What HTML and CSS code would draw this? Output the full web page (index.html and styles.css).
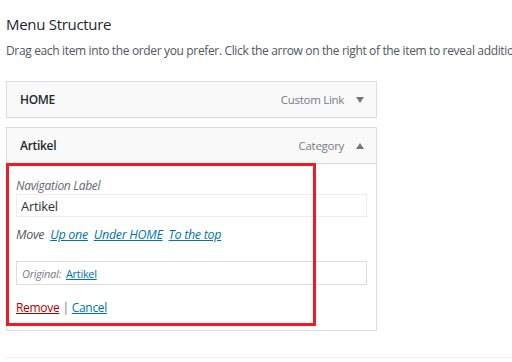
FILE: index.html
```html
<!DOCTYPE html>
<html lang="en">
<head>
    <meta charset="UTF-8">
    <title>Menu Structure</title>
    <link rel="stylesheet" href="styles.css">
</head>
<body>

<div class="page">
    <h2>Menu Structure</h2>
    <p class="hint">Drag each item into the order you prefer. Click the arrow on the right of the item to reveal additional configuration options.</p>

    <!-- Menu items -->
    <div class="menu-item">
        <div class="item-bar">
            <span class="item-title">HOME</span>
            <span class="item-type">Custom Link</span>
            <span class="arrow down"></span>
        </div>
    </div>

    <div class="menu-item open">
        <div class="item-bar">
            <span class="item-title">Artikel</span>
            <span class="item-type">Category</span>
            <span class="arrow up"></span>
        </div>
        <div class="item-settings">
            <label for="navLabel">Navigation Label</label>
            <input type="text" id="navLabel" value="Artikel">

            <div class="move">
                Move
                <a href="#">Up one</a>
                <a href="#">Under HOME</a>
                <a href="#">To the top</a>
            </div>

            <div class="original">
                <em>Original:</em> <a href="#">Artikel</a>
            </div>

            <div class="actions">
                <a href="#" class="remove">Remove</a><span class="sep">|</span><a href="#">Cancel</a>
            </div>

            <div class="highlight"></div>
        </div>
    </div>

    <div class="divider"></div>
</div>

</body>
</html>
```

FILE: styles.css
```css
body {
    margin: 0;
    padding: 0;
    background: #fff;
    font-family: "Open Sans", sans-serif;
    letter-spacing: -0.3px;
    color: #23282d;
    overflow: hidden;
}
.page {
    padding: 12px 0 0 6px;
}
h2 {
    margin: 0;
    font-size: 15px;
    font-weight: 400;
    line-height: 24px;
}
.hint {
    margin: 8px 0 23px;
    font-size: 12px;
    letter-spacing: -0.35px;
    line-height: 14px;
    color: #50575e;
    white-space: nowrap;
    overflow: hidden;
}
.menu-item {
    width: 369px;
    border: 1px solid #dcdcde;
    background: #f9f9f9;
    margin-bottom: 9px;
}
.item-bar {
    display: flex;
    align-items: center;
    height: 35px;
    padding: 0 12px 0 13px;
    font-size: 12px;
}
.item-title {
    flex: 1;
    font-weight: 600;
}
.item-type {
    font-size: 11.5px;
    color: #787c82;
    margin-right: 12px;
}
.arrow {
    width: 0;
    height: 0;
    border-left: 4px solid transparent;
    border-right: 4px solid transparent;
}
.arrow.down {
    border-top: 6px solid #72777c;
}
.arrow.up {
    border-bottom: 6px solid #72777c;
}
.item-settings {
    position: relative;
    background: #fff;
    border-top: 1px solid #dcdcde;
    padding: 13px 10px 14px 9px;
    font-size: 12px;
}
label {
    display: block;
    font-style: italic;
    line-height: 16px;
    color: #646970;
    margin: 1px 0 0;
}
input {
    display: block;
    box-sizing: border-box;
    width: 351px;
    height: 23px;
    margin: 0;
    padding: 0 4px;
    border: 1px solid #ededed;
    font-family: "Open Sans", sans-serif;
    font-size: 13px;
    letter-spacing: -0.3px;
    color: #2c3338;
}
.move {
    margin-top: 10px;
    line-height: 16px;
    font-size: 12.5px;
    font-style: italic;
    color: #50575e;
}
.move a {
    margin-left: 3px;
}
a {
    color: #0073aa;
}
.original {
    box-sizing: border-box;
    width: 351px;
    height: 24px;
    margin-top: 18px;
    padding: 0 5px;
    border: 1px solid #dcdcde;
    display: flex;
    align-items: center;
    gap: 5px;
    font-size: 11px;
}
.original em {
    color: #787c82;
}
.actions {
    margin-top: 15px;
    line-height: 16px;
    font-size: 12px;
    color: #787c82;
}
.actions .remove {
    color: #a00;
}
.sep {
    margin: 0 3px;
}
.highlight {
    position: absolute;
    left: -1px;
    top: -1px;
    width: 304px;
    height: 157px;
    border: 3px solid #ed1c24;
}
.divider {
    margin-top: 26px;
    border-top: 1px solid #eee;
}
```
